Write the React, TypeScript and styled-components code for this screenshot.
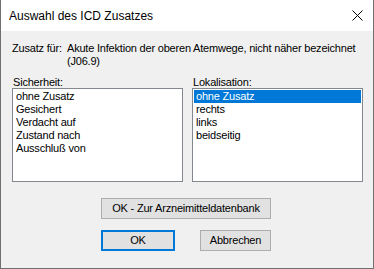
import React from "react";
import styled, { createGlobalStyle } from "styled-components";

const Global = createGlobalStyle`
  html, body { margin: 0; padding: 0; background: #ffffff; }
  * { box-sizing: border-box; }
`;

const Window = styled.div`
  width: 374px;
  height: 269px;
  display: flex;
  flex-direction: column;
  border: 1px solid #707070;
  border-top: none;
  background: #f0f0f0;
  font-family: "Liberation Sans", Arial, sans-serif;
  font-size: 11px;
  line-height: 13px;
  letter-spacing: -0.2px;
  color: #000;
`;

const TitleBar = styled.div`
  height: 31px;
  flex: none;
  background: #ffffff;
  display: flex;
  align-items: center;
  justify-content: space-between;
  padding: 0 10px 0 8px;
  letter-spacing: 0;
`;

const Title = styled.div`
  font-size: 12px;
  line-height: 16px;
  padding-top: 1px;
`;

const CloseIcon = styled.svg`
  width: 11px;
  height: 11px;
  display: block;
`;

const Body = styled.div`
  flex: 1;
  padding: 11px 10px 0 11px;
  display: flex;
  flex-direction: column;
`;

const InfoRow = styled.div`
  display: flex;
`;

const InfoLabel = styled.div`
  width: 55px;
  flex: none;
`;

const InfoValue = styled.div`
  width: 298px;
`;

const Lists = styled.div`
  display: flex;
  gap: 9px;
  margin-top: 8px;
`;

const ListGroup = styled.div`
  width: 171px;
  display: flex;
  flex-direction: column;
`;

const ListLabel = styled.div`
  height: 12px;
  line-height: 13px;
  padding-left: 1px;
`;

const ListBox = styled.div`
  height: 94px;
  border: 1px solid #828790;
  background: #ffffff;
  padding: 1px;
`;

const Item = styled.div<{ $selected?: boolean }>`
  height: 13px;
  line-height: 13px;
  padding-left: 2px;
  white-space: nowrap;
  background: ${(p) => (p.$selected ? "#0078d7" : "transparent")};
  color: ${(p) => (p.$selected ? "#ffffff" : "#000000")};
`;

const Footer = styled.div`
  margin-top: 16px;
  margin-left: 89px;
  width: 170px;
  display: flex;
  flex-direction: column;
  gap: 11px;
`;

const ButtonRow = styled.div`
  display: flex;
  justify-content: space-between;
`;

const Button = styled.button<{ $width: number; $default?: boolean }>`
  width: ${(p) => p.$width}px;
  height: 21px;
  padding: 0;
  margin: 0;
  font-family: "Liberation Sans", Arial, sans-serif;
  font-size: 11px;
  line-height: 13px;
  letter-spacing: -0.2px;
  color: #000;
  background: #e1e1e1;
  border: ${(p) => (p.$default ? "2px solid #0078d7" : "1px solid #adadad")};
  border-radius: 0;
  outline: none;
`;

const sicherheit = ["ohne Zusatz", "Gesichert", "Verdacht auf", "Zustand nach", "Ausschluß von"];
const lokalisation = ["ohne Zusatz", "rechts", "links", "beidseitig"];

export default function App() {
  return (
    <>
      <Global />
      <Window>
        <TitleBar>
          <Title>Auswahl des ICD Zusatzes</Title>
          <CloseIcon viewBox="0 0 11 11">
            <path d="M0.5 0.5 L10.5 10.5 M10.5 0.5 L0.5 10.5" stroke="#000" strokeWidth="1" fill="none" />
          </CloseIcon>
        </TitleBar>
        <Body>
          <InfoRow>
            <InfoLabel>Zusatz für:</InfoLabel>
            <InfoValue>Akute Infektion der oberen Atemwege, nicht näher bezeichnet (J06.9)</InfoValue>
          </InfoRow>
          <Lists>
            <ListGroup>
              <ListLabel>Sicherheit:</ListLabel>
              <ListBox>
                {sicherheit.map((s) => (
                  <Item key={s}>{s}</Item>
                ))}
              </ListBox>
            </ListGroup>
            <ListGroup>
              <ListLabel>Lokalisation:</ListLabel>
              <ListBox>
                {lokalisation.map((s, i) => (
                  <Item key={s} $selected={i === 0}>
                    {s}
                  </Item>
                ))}
              </ListBox>
            </ListGroup>
          </Lists>
          <Footer>
            <Button $width={170}>OK - Zur Arzneimitteldatenbank</Button>
            <ButtonRow>
              <Button $width={74} $default>
                OK
              </Button>
              <Button $width={71}>Abbrechen</Button>
            </ButtonRow>
          </Footer>
        </Body>
      </Window>
    </>
  );
}
